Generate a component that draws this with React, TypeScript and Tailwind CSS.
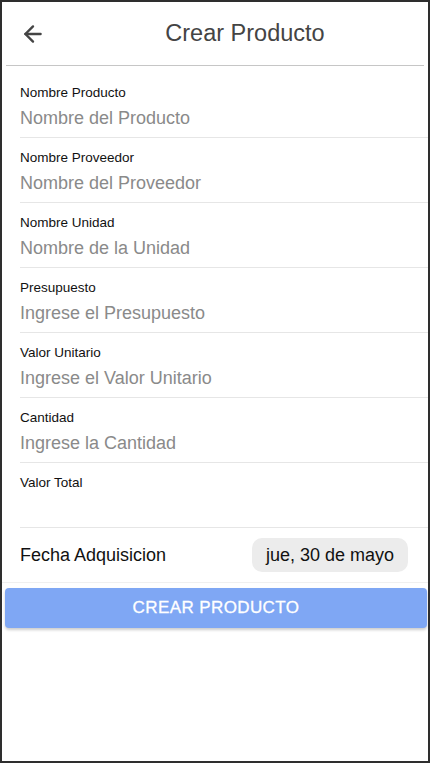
import { ArrowLeft } from 'lucide-react';

const fields = [
  { label: 'Nombre Producto', placeholder: 'Nombre del Producto' },
  { label: 'Nombre Proveedor', placeholder: 'Nombre del Proveedor' },
  { label: 'Nombre Unidad', placeholder: 'Nombre de la Unidad' },
  { label: 'Presupuesto', placeholder: 'Ingrese el Presupuesto' },
  { label: 'Valor Unitario', placeholder: 'Ingrese el Valor Unitario' },
  { label: 'Cantidad', placeholder: 'Ingrese la Cantidad' },
  { label: 'Valor Total', placeholder: '' },
];

export default function App() {
  return (
    <div className="w-[430px] h-[763px] bg-white border-2 border-[#2e2e2e] overflow-hidden font-['Liberation_Sans',Arial,sans-serif]">
      {/* Header */}
      <div className="flex items-center h-[63px]">
        <button className="w-[62px] h-full flex items-center justify-center text-[#444]">
          <ArrowLeft className="w-[26px] h-[26px]" strokeWidth={2.2} />
        </button>
        <h1 className="flex-1 text-center text-[23.5px] text-[#444] pr-[2px]">Crear Producto</h1>
      </div>
      <div className="mx-[4px] h-px bg-[#c6c6c6]" />

      {/* Form */}
      <div className="pt-[7px]">
        {fields.map((f) => (
          <div key={f.label} className="pl-[18px]">
            <div className="border-b border-[#e6e6e6] pt-[12px] pb-[7px]">
              <label className="block text-[13.5px] leading-[16px] text-[#111]">{f.label}</label>
              <input
                placeholder={f.placeholder}
                className="mt-[5px] block w-full h-[24px] text-[18px] outline-none placeholder:text-[#8a8a8a] bg-transparent"
              />
            </div>
          </div>
        ))}

        <div className="flex items-center justify-between pl-[18px] pr-[20px] h-[55px] border-b border-[#f0f0f0]">
          <span className="text-[18px] text-[#111]">Fecha Adquisicion</span>
          <div className="h-[34px] px-[14px] flex items-center rounded-[10px] bg-[#ececec] text-[18px] text-[#111]">
            jue, 30 de mayo
          </div>
        </div>

        <div className="pl-[3px] pr-[1px] pt-[5px]">
          <button className="w-full h-[40px] rounded-[4px] bg-[#7fa7f4] text-white text-[17px] tracking-[0.4px] [-webkit-text-stroke:0.3px_white] shadow-[0_2px_3px_rgba(0,0,0,0.2)]">
            CREAR PRODUCTO
          </button>
        </div>
      </div>
    </div>
  );
}
